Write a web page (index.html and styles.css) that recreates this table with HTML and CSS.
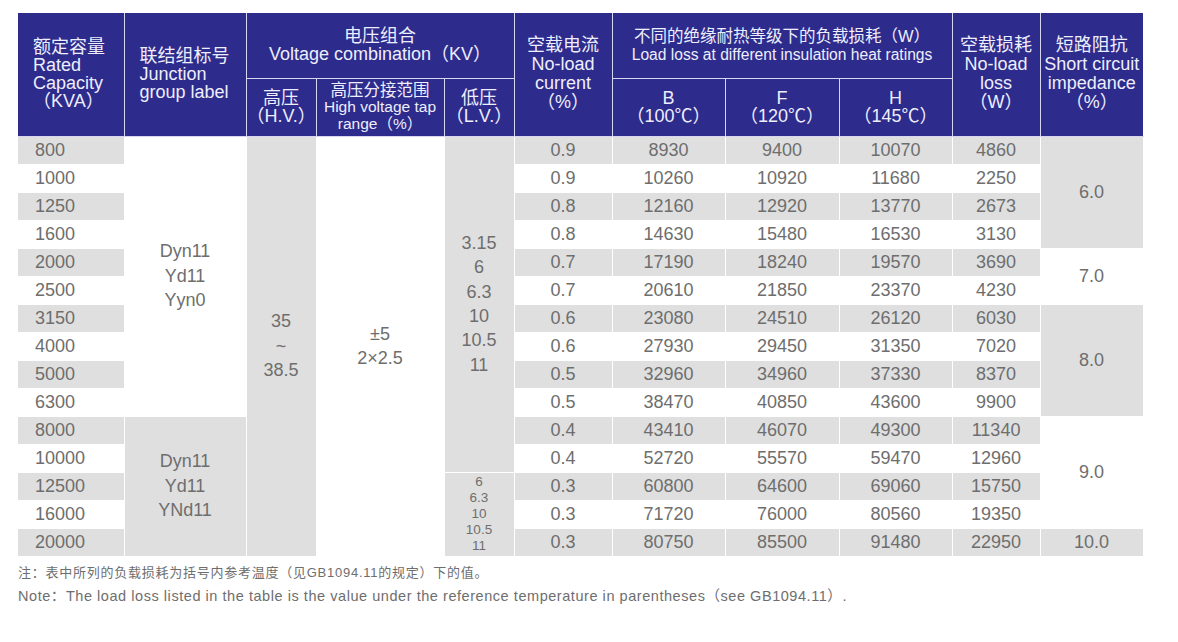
FILE: index.html
```html
<!DOCTYPE html>
<html lang="zh-CN">
<head>
<meta charset="utf-8">
<title>SCB 35kV 变压器参数</title>
<link rel="stylesheet" href="styles.css">
</head>
<body>
<div class="sheet">
<table class="spec">
  <colgroup>
    <col class="w-cap"><col class="w-grp"><col class="w-hv"><col class="w-tap"><col class="w-lv">
    <col class="w-cur"><col class="w-b"><col class="w-f"><col class="w-h"><col class="w-nl"><col class="w-sc">
  </colgroup>
  <thead>
    <tr class="h1">
      <th rowspan="2" class="left pl-cap">额定容量<br>Rated<br>Capacity<br>（KVA）</th>
      <th rowspan="2" class="left pl-grp">联结组标号<br>Junction<br>group label</th>
      <th colspan="3">电压组合<br>Voltage combination（KV）</th>
      <th rowspan="2" class="tall">空载电流<br>No-load<br>current<br>（%）</th>
      <th colspan="3"><span class="zh16">不同的绝缘耐热等级下的负载损耗（W）</span><br><span class="en15">Load loss at different insulation heat ratings</span></th>
      <th rowspan="2" class="tall">空载损耗<br>No-load<br>loss<br>（W）</th>
      <th rowspan="2" class="tall">短路阻抗<br>Short circuit<br>impedance<br>（%）</th>
    </tr>
    <tr class="h2">
      <th>高压<br>（H.V.）</th>
      <th class="tap"><span class="zh16">高压分接范围</span><br>High voltage tap<br>range（%）</th>
      <th>低压<br>（L.V.）</th>
      <th>B<br>（100℃）</th>
      <th>F<br>（120℃）</th>
      <th>H<br>（145℃）</th>
    </tr>
  </thead>
  <tbody>
    <tr class="alt">
      <td class="cap">800</td>
      <td rowspan="10" class="multi">Dyn11<br>Yd11<br>Yyn0</td>
      <td rowspan="15" class="multi shade">35<br>~<br>38.5</td>
      <td rowspan="15" class="multi">±5<br>2×2.5</td>
      <td rowspan="12" class="multi shade">3.15<br>6<br>6.3<br>10<br>10.5<br>11</td>
      <td>0.9</td><td>8930</td><td>9400</td><td>10070</td><td>4860</td>
      <td rowspan="4" class="shade">6.0</td>
    </tr>
    <tr><td class="cap">1000</td><td>0.9</td><td>10260</td><td>10920</td><td>11680</td><td>2250</td></tr>
    <tr class="alt"><td class="cap">1250</td><td>0.8</td><td>12160</td><td>12920</td><td>13770</td><td>2673</td></tr>
    <tr><td class="cap">1600</td><td>0.8</td><td>14630</td><td>15480</td><td>16530</td><td>3130</td></tr>
    <tr class="alt"><td class="cap">2000</td><td>0.7</td><td>17190</td><td>18240</td><td>19570</td><td>3690</td>
      <td rowspan="2">7.0</td></tr>
    <tr><td class="cap">2500</td><td>0.7</td><td>20610</td><td>21850</td><td>23370</td><td>4230</td></tr>
    <tr class="alt"><td class="cap">3150</td><td>0.6</td><td>23080</td><td>24510</td><td>26120</td><td>6030</td>
      <td rowspan="4" class="shade">8.0</td></tr>
    <tr><td class="cap">4000</td><td>0.6</td><td>27930</td><td>29450</td><td>31350</td><td>7020</td></tr>
    <tr class="alt"><td class="cap">5000</td><td>0.5</td><td>32960</td><td>34960</td><td>37330</td><td>8370</td></tr>
    <tr><td class="cap">6300</td><td>0.5</td><td>38470</td><td>40850</td><td>43600</td><td>9900</td></tr>
    <tr class="alt"><td class="cap">8000</td>
      <td rowspan="5" class="multi shade">Dyn11<br>Yd11<br>YNd11</td>
      <td>0.4</td><td>43410</td><td>46070</td><td>49300</td><td>11340</td>
      <td rowspan="4">9.0</td></tr>
    <tr><td class="cap">10000</td><td>0.4</td><td>52720</td><td>55570</td><td>59470</td><td>12960</td></tr>
    <tr class="alt"><td class="cap">12500</td>
      <td rowspan="3" class="small shade">6<br>6.3<br>10<br>10.5<br>11</td>
      <td>0.3</td><td>60800</td><td>64600</td><td>69060</td><td>15750</td></tr>
    <tr><td class="cap">16000</td><td>0.3</td><td>71720</td><td>76000</td><td>80560</td><td>19350</td></tr>
    <tr class="alt"><td class="cap">20000</td><td>0.3</td><td>80750</td><td>85500</td><td>91480</td><td>22950</td>
      <td>10.0</td></tr>
  </tbody>
</table>
<p class="note-zh">注：表中所列的负载损耗为括号内参考温度（见GB1094.11的规定）下的值。</p>
<p class="note-en">Note：The load loss listed in the table is the value under the reference temperature in parentheses（see GB1094.11）.</p>
</div>
</body>
</html>
```
FILE: styles.css
```css
html, body {
  margin: 0;
  padding: 0;
  background: #ffffff;
}

.sheet {
  padding: 13px 18px 0 18px;
  font-family: "Liberation Sans", Arial, "Noto Sans CJK SC", sans-serif;
  color: #6e6e6e;
}

.spec {
  width: 1125px;
  table-layout: fixed;
  border-collapse: collapse;
  border-spacing: 0;
}

.w-cap { width: 106px; }
.w-grp { width: 122px; }
.w-hv  { width: 70px; }
.w-tap { width: 128px; }
.w-lv  { width: 70px; }
.w-cur { width: 98px; }
.w-b   { width: 113px; }
.w-f   { width: 114px; }
.w-h   { width: 113px; }
.w-nl  { width: 88px; }
.w-sc  { width: 103px; }

.spec th {
  background: #2d2b8c;
  color: #eeeefc;
  font-weight: normal;
  font-size: 18px;
  line-height: 18px;
  text-align: center;
  vertical-align: middle;
  padding: 0;
  border: 1px solid #d6d6ee;
  white-space: nowrap;
  overflow: hidden;
}

.spec thead tr:first-child th { border-top: none; }
.spec th:first-child { border-left: none; }
.spec th:last-child { border-right: none; }

.spec tr.h1 { height: 65px; }
.spec tr.h2 { height: 58px; }

.spec th.left { text-align: left; }
.spec th.pl-cap { padding-left: 15px; }
.spec th.pl-grp { padding-left: 15px; }
.spec th.tall { line-height: 19px; }
.spec th.tap { font-size: 15.5px; line-height: 16.5px; }

.zh16 { font-size: 16.5px; }
.en15 { font-size: 15.6px; }

.spec td {
  font-size: 18px;
  line-height: 20px;
  padding: 0;
  text-align: center;
  vertical-align: middle;
  border: 1px solid #ffffff;
  white-space: nowrap;
}

.spec tbody tr { height: 28px; }
.spec tbody td:first-child { border-left: none; }

.spec tr.alt td { background: #dfdfdf; }
.spec tr.alt td[rowspan] { background: transparent; }
.spec tr.alt td.shade,
.spec td.shade { background: #dfdfdf; }

.spec td.cap { text-align: left; padding-left: 17px; }
.spec td.multi { line-height: 24.4px; }
.spec td.small { font-size: 13.5px; line-height: 16px; }

.note-zh {
  margin: 6px 0 0 0;
  font-size: 13px;
  line-height: 20px;
  letter-spacing: 0.75px;
}

.note-en {
  margin: 3px 0 0 0;
  font-size: 14.5px;
  line-height: 20px;
  letter-spacing: 0.55px;
}
```
